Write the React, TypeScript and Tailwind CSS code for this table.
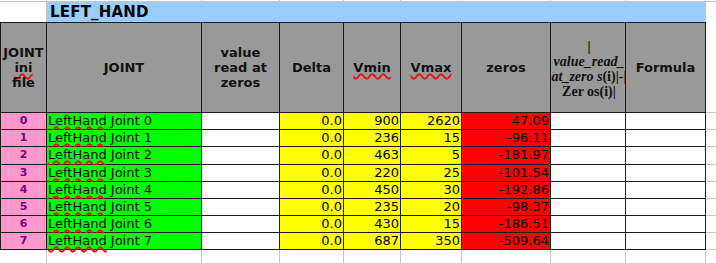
import React from "react";

const cols = "grid-cols-[47px_155px_78px_64px_57px_61px_89px_75px_80px_10px]";

const rows = [
  { vmin: 900, vmax: 2620, zeros: "47.09", h: "h-[17px]" },
  { vmin: 236, vmax: 15, zeros: "-96.11", h: "h-[17px]" },
  { vmin: 463, vmax: 5, zeros: "-181.97", h: "h-[18px]" },
  { vmin: 220, vmax: 25, zeros: "-101.54", h: "h-[17px]" },
  { vmin: 450, vmax: 30, zeros: "-192.86", h: "h-[17px]" },
  { vmin: 235, vmax: 20, zeros: "-98.37", h: "h-[17px]" },
  { vmin: 430, vmax: 15, zeros: "-186.51", h: "h-[17px]" },
  { vmin: 687, vmax: 350, zeros: "-509.64", h: "h-[17px]" },
];

// dark cell borders
const dk = "border-[#1c1c1c]";
const grid = "border-[#c6c6c6]";

function Wavy({ children }: { children: React.ReactNode }) {
  return (
    <span className="underline decoration-wavy decoration-[#e81010] decoration-[1.5px] underline-offset-[1px]">
      {children}
    </span>
  );
}

function HeadCell({ children, first = false, serif = false }: { children: React.ReactNode; first?: boolean; serif?: boolean }) {
  return (
    <div
      className={`h-[91px] border-t border-r border-b ${dk} ${first ? "border-l" : ""} bg-[#999999] flex items-center justify-center text-center text-[#111] ${
        serif ? "font-['Liberation_Serif',serif] text-[14px] leading-[15px] font-bold" : "text-[13px] leading-[15px] font-bold"
      }`}
    >
      {children}
    </div>
  );
}

export default function App() {
  return (
    <div className={`grid ${cols} w-[716px] h-[263px] overflow-hidden bg-white font-['DejaVu_Sans',sans-serif] text-black`}>
      {/* previous sheet row, only its bottom edge shows */}
      {Array.from({ length: 10 }).map((_, i) => (
        <div key={`t${i}`} className={`h-[2px] border-b ${i < 9 ? "border-r" : ""} ${grid}`} />
      ))}

      {/* title row */}
      <div className={`h-[20px] border-r ${grid}`} />
      <div className="col-span-8 h-[20px] bg-[#99ccff] pl-[3px] text-[15px] leading-[20px] font-bold tracking-[0.2px]">
        LEFT_HAND
      </div>
      <div className="h-[20px]" />

      {/* header row */}
      <HeadCell first>
        <span>
          JOINT
          <br />
          <Wavy>ini</Wavy>
          <br />
          file
        </span>
      </HeadCell>
      <HeadCell>JOINT</HeadCell>
      <HeadCell>
        <span>
          value
          <br />
          read at
          <br />
          zeros
        </span>
      </HeadCell>
      <HeadCell>Delta</HeadCell>
      <HeadCell>
        <Wavy>Vmin</Wavy>
      </HeadCell>
      <HeadCell>
        <Wavy>Vmax</Wavy>
      </HeadCell>
      <HeadCell>zeros</HeadCell>
      <HeadCell serif>
        <span className="mt-[3px] pl-[2px] whitespace-nowrap">
          |
          <br />
          <i>value_read_</i>
          <br />
          <i>at_zero s</i>(i)|-|
          <br />
          Zer os(i)|
        </span>
      </HeadCell>
      <HeadCell>Formula</HeadCell>
      <div className={`h-[91px] border-b ${grid}`} />

      {/* data rows */}
      {rows.map((r, i) => (
        <React.Fragment key={i}>
          <div className={`${r.h} border-l border-r border-b ${dk} bg-[#ff99cc] flex items-center justify-center text-[11px] font-bold text-[#800080]`}>
            {i}
          </div>
          <div className={`${r.h} border-r border-b ${dk} bg-[#00ff00] pl-[1px] text-[13px] leading-[16px] whitespace-nowrap`}>
            <Wavy>LeftHand</Wavy> Joint {i}
          </div>
          <div className={`${r.h} border-r border-b ${dk}`} />
          <div className={`${r.h} border-r border-b ${dk} bg-[#ffff00] pr-[1px] text-right text-[13px] leading-[16px]`}>0.0</div>
          <div className={`${r.h} border-r border-b ${dk} bg-[#ffff00] pr-[1px] text-right text-[13px] leading-[16px]`}>{r.vmin}</div>
          <div className={`${r.h} border-r border-b ${dk} bg-[#ffff00] pr-[1px] text-right text-[13px] leading-[16px]`}>{r.vmax}</div>
          <div className={`${r.h} border-r border-b ${dk} bg-[#ff0000] pr-[1px] text-right text-[13px] leading-[16px]`}>{r.zeros}</div>
          <div className={`${r.h} border-r border-b ${dk}`} />
          <div className={`${r.h} border-r border-b ${dk}`} />
          <div className={`${r.h} border-b ${grid}`} />
        </React.Fragment>
      ))}

      {/* empty sheet row below */}
      {Array.from({ length: 10 }).map((_, i) => (
        <div key={`b${i}`} className={`h-[14px] ${i < 9 ? "border-r" : ""} ${grid}`} />
      ))}
    </div>
  );
}
